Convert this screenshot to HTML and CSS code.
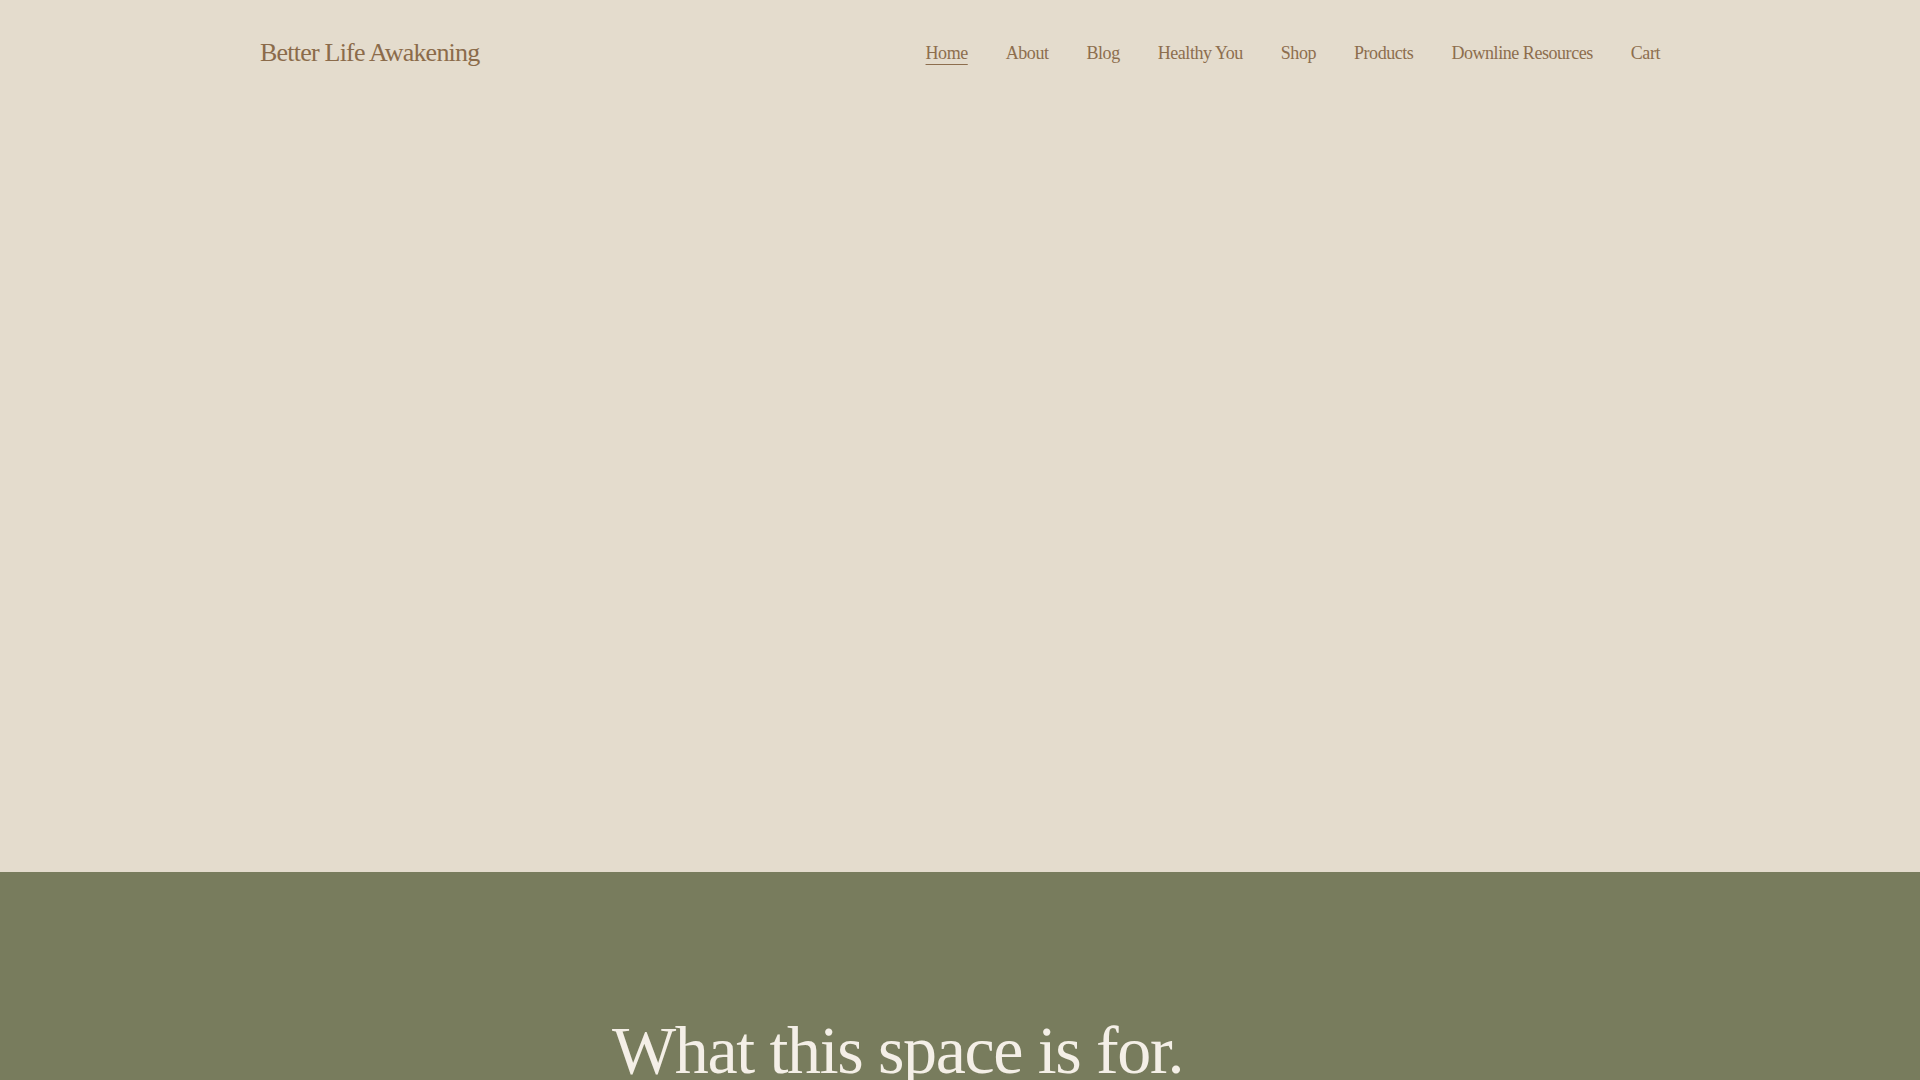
FILE: index.html
```html
<!DOCTYPE html>
<html lang="en">
<head>
<meta charset="utf-8">
<title>Better Life Awakening</title>
<link rel="stylesheet" href="styles.css">
</head>
<body>
<section class="hero">
  <header class="site-header">
    <a class="logo" href="#">Better Life Awakening</a>
    <nav class="main-nav">
      <a class="nav-link active" href="#">Home</a>
      <a class="nav-link" href="#">About</a>
      <a class="nav-link" href="#">Blog</a>
      <a class="nav-link" href="#">Healthy You</a>
      <a class="nav-link" href="#">Shop</a>
      <a class="nav-link" href="#">Products</a>
      <a class="nav-link" href="#">Downline Resources</a>
      <a class="nav-link" href="#">Cart</a>
    </nav>
  </header>
</section>
<section class="purpose">
  <div class="purpose-inner">
    <h2 class="purpose-title">What this space is for.</h2>
  </div>
</section>
</body>
</html>
```

FILE: styles.css
```css
*, *::before, *::after {
  box-sizing: border-box;
}
html, body {
  margin: 0;
  padding: 0;
}
body {
  font-family: "Liberation Serif", "Times New Roman", serif;
  background: #e4dccd;
  overflow: hidden;
}
.hero {
  height: 872px;
  background: #e4dccd;
}
.site-header {
  max-width: 1400px;
  margin: 0 auto;
  padding-top: 37px;
  display: flex;
  align-items: center;
  justify-content: space-between;
}
.logo {
  font-size: 26px;
  line-height: 1.2;
  letter-spacing: -0.03em;
  color: #8b6b4a;
  text-decoration: none;
}
.main-nav {
  display: flex;
  align-items: center;
  gap: 38px;
  padding-top: 2px;
}
.nav-link {
  font-size: 18px;
  line-height: 1.2;
  letter-spacing: -0.025em;
  color: #8d6e4e;
  text-decoration: none;
}
.nav-link.active {
  text-decoration: underline;
  text-decoration-thickness: 1px;
  text-underline-offset: 5px;
}
.purpose {
  background: #787c5d;
  padding-top: 138px;
  min-height: 400px;
}
.purpose-inner {
  max-width: 1400px;
  margin: 0 auto;
  padding-left: 352px;
}
.purpose-title {
  margin: 0;
  text-align: left;
  font-weight: 400;
  font-size: 68px;
  line-height: 1.2;
  letter-spacing: -0.02em;
  color: #f4efe7;
}
```
